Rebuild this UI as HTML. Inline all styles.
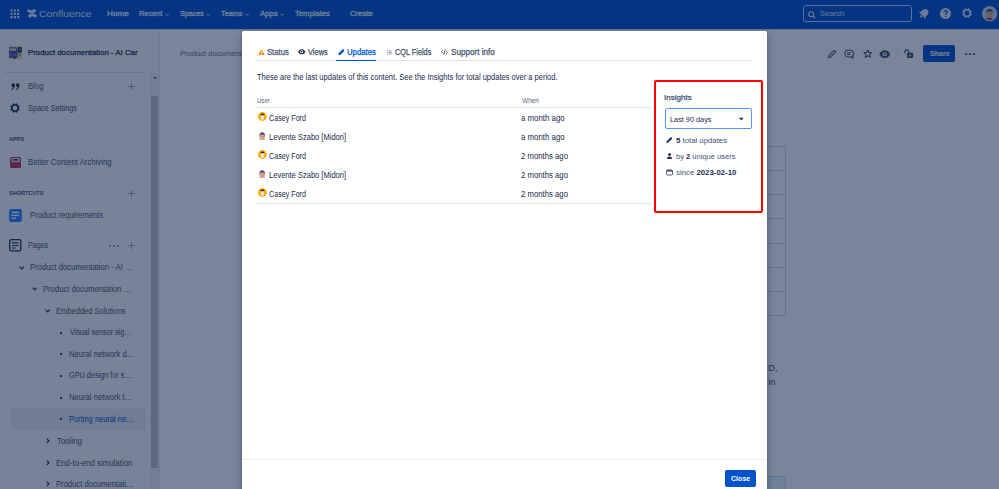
<!DOCTYPE html>
<html><head><meta charset="utf-8"><style>
html,body{margin:0;padding:0;}
body{width:999px;height:489px;overflow:hidden;position:relative;background:#fff;font-family:"Liberation Sans",sans-serif;}
.t{position:absolute;line-height:1;white-space:nowrap;}
.t b{font-weight:700;color:#172B4D}
#blanket{position:absolute;left:0;top:0;width:999px;height:489px;background:rgba(9,30,66,0.54);}
</style></head><body>
<div style="position:absolute;left:0px;top:0px;width:999px;height:28.6px;background:#0052CC"></div>
<svg style="position:absolute;left:10.2px;top:8.8px;" width="10" height="10" viewBox="0 0 10 10"><rect x="0.5" y="0.5" width="2.1" height="2.1" rx="0.3" fill="#DEEBFF"/><rect x="0.5" y="3.8" width="2.1" height="2.1" rx="0.3" fill="#DEEBFF"/><rect x="0.5" y="7.1" width="2.1" height="2.1" rx="0.3" fill="#DEEBFF"/><rect x="3.8" y="0.5" width="2.1" height="2.1" rx="0.3" fill="#DEEBFF"/><rect x="3.8" y="3.8" width="2.1" height="2.1" rx="0.3" fill="#DEEBFF"/><rect x="3.8" y="7.1" width="2.1" height="2.1" rx="0.3" fill="#DEEBFF"/><rect x="7.1" y="0.5" width="2.1" height="2.1" rx="0.3" fill="#DEEBFF"/><rect x="7.1" y="3.8" width="2.1" height="2.1" rx="0.3" fill="#DEEBFF"/><rect x="7.1" y="7.1" width="2.1" height="2.1" rx="0.3" fill="#DEEBFF"/></svg>
<svg style="position:absolute;left:26.9px;top:9.2px" width="9.7" height="8.8" viewBox="-0.6 0.6 24.2 23" preserveAspectRatio="none"><path fill="#DEEBFF" d="M2.31 18.1c-.25.4-.52.87-.75 1.24a.76.76 0 0 0 .26 1.04l5 3.080a.76.76 0 0 0 1.05-.25c.2-.33.46-.77.74-1.24 1.98-3.27 3.97-2.87 7.56-1.15l4.96 2.36a.76.76 0 0 0 1.02-.38l2.38-5.38a.76.76 0 0 0-.38-1c-1.05-.49-3.130-1.47-5-2.37C12.4 10.46 6.08 10.7 2.3 18.1z"/><path fill="#DEEBFF" d="M21.69 5.92c.25-.4.52-.87.75-1.24a.76.76 0 0 0-.26-1.04l-5-3.08a.76.76 0 0 0-1.08.23c-.2.33-.46.77-.74 1.24-1.98 3.27-3.97 2.870-7.56 1.15L2.84.83a.76.76 0 0 0-1.02.38L-.56 6.59a.76.76 0 0 0 .38 1c1.05.49 3.13 1.47 5 2.37 6.74 3.26 13.06 3.02 16.840-4.040z"/></svg>
<div class="t" style="left:39.36px;top:9.00px;font-size:9.7px;font-weight:400;color:#DEEBFF;transform:scaleX(1.0728);transform-origin:0 0;">Confluence</div>
<div class="t" style="left:107.37px;top:10.00px;font-size:7.8px;font-weight:400;-webkit-text-stroke:0.35px #DEEBFF;color:#DEEBFF;transform:scaleX(1.0452);transform-origin:0 0;">Home</div>
<div class="t" style="left:139.43px;top:10.00px;font-size:7.8px;font-weight:400;-webkit-text-stroke:0.35px #DEEBFF;color:#DEEBFF;transform:scaleX(0.9461);transform-origin:0 0;">Recent</div>
<div class="t" style="left:179.93px;top:10.00px;font-size:7.8px;font-weight:400;-webkit-text-stroke:0.35px #DEEBFF;color:#DEEBFF;transform:scaleX(0.9209);transform-origin:0 0;">Spaces</div>
<div class="t" style="left:221.31px;top:10.00px;font-size:7.8px;font-weight:400;-webkit-text-stroke:0.35px #DEEBFF;color:#DEEBFF;transform:scaleX(0.9333);transform-origin:0 0;">Teams</div>
<div class="t" style="left:259.90px;top:10.00px;font-size:7.8px;font-weight:400;-webkit-text-stroke:0.35px #DEEBFF;color:#DEEBFF;transform:scaleX(1.0057);transform-origin:0 0;">Apps</div>
<div class="t" style="left:295.10px;top:10.00px;font-size:7.8px;font-weight:400;-webkit-text-stroke:0.35px #DEEBFF;color:#DEEBFF;transform:scaleX(0.9801);transform-origin:0 0;">Templates</div>
<div class="t" style="left:350.11px;top:10.00px;font-size:7.8px;font-weight:400;-webkit-text-stroke:0.35px #DEEBFF;color:#DEEBFF;transform:scaleX(0.9692);transform-origin:0 0;">Create</div>
<svg style="position:absolute;left:165.3px;top:12.6px;" width="4.5" height="3.5" viewBox="0 0 4.5 3.5"><path d="M.5.6 2.2 2.5 3.9.6" stroke="#DEEBFF" stroke-width=".85" fill="none"/></svg>
<svg style="position:absolute;left:205.6px;top:12.6px;" width="4.5" height="3.5" viewBox="0 0 4.5 3.5"><path d="M.5.6 2.2 2.5 3.9.6" stroke="#DEEBFF" stroke-width=".85" fill="none"/></svg>
<svg style="position:absolute;left:245.3px;top:12.6px;" width="4.5" height="3.5" viewBox="0 0 4.5 3.5"><path d="M.5.6 2.2 2.5 3.9.6" stroke="#DEEBFF" stroke-width=".85" fill="none"/></svg>
<svg style="position:absolute;left:279.8px;top:12.6px;" width="4.5" height="3.5" viewBox="0 0 4.5 3.5"><path d="M.5.6 2.2 2.5 3.9.6" stroke="#DEEBFF" stroke-width=".85" fill="none"/></svg>
<div style="position:absolute;left:803px;top:5px;width:108.5px;height:17px;box-sizing:border-box;border:1px solid #B3D4FF;border-radius:3px;background:rgba(255,255,255,0.0)"></div>
<svg style="position:absolute;left:808px;top:10.5px;" width="8" height="8" viewBox="0 0 8 8"><circle cx="3.2" cy="3.2" r="2.5" stroke="#DEEBFF" stroke-width="1.1" fill="none"/><path d="M5 5 7.2 7.2" stroke="#DEEBFF" stroke-width="1.2"/></svg>
<div class="t" style="left:820.11px;top:10.00px;font-size:7.8px;font-weight:400;color:#DEEBFF;transform:scaleX(0.9874);transform-origin:0 0;">Search</div>
<svg style="position:absolute;left:917px;top:7px;" width="14" height="13" viewBox="0 0 14 13"><g transform="rotate(45 7 6.5)"><path d="M7 1.6c-2 0-3.4 1.5-3.4 3.5v2.4L2.3 9.2h9.4L10.4 7.5V5.1C10.4 3.1 9 1.6 7 1.6z" fill="#DEEBFF"/><ellipse cx="7" cy="10.6" rx="1.3" ry=".9" fill="#DEEBFF"/></g></svg>
<svg style="position:absolute;left:940px;top:8px;" width="11" height="11" viewBox="0 0 11 11"><circle cx="5.5" cy="5.5" r="5.5" fill="#DEEBFF"/><path d="M3.8 4.3c0-1 .8-1.7 1.7-1.7s1.7.7 1.7 1.6c0 1.2-1.6 1.3-1.6 2.5" stroke="#0052CC" stroke-width="1.2" fill="none"/><circle cx="5.6" cy="8.4" r=".7" fill="#0052CC"/></svg>
<svg style="position:absolute;left:961.8px;top:8.4px;" width="10" height="10" viewBox="0 0 10 10"><circle cx="5" cy="5" r="3.3" stroke="#DEEBFF" stroke-width="1.5" fill="none"/><rect x="4.1" y="0.1" width="1.8" height="2" fill="#DEEBFF" transform="rotate(22.5 5 5)"/><rect x="4.1" y="0.1" width="1.8" height="2" fill="#DEEBFF" transform="rotate(67.5 5 5)"/><rect x="4.1" y="0.1" width="1.8" height="2" fill="#DEEBFF" transform="rotate(112.5 5 5)"/><rect x="4.1" y="0.1" width="1.8" height="2" fill="#DEEBFF" transform="rotate(157.5 5 5)"/><rect x="4.1" y="0.1" width="1.8" height="2" fill="#DEEBFF" transform="rotate(202.5 5 5)"/><rect x="4.1" y="0.1" width="1.8" height="2" fill="#DEEBFF" transform="rotate(247.5 5 5)"/><rect x="4.1" y="0.1" width="1.8" height="2" fill="#DEEBFF" transform="rotate(292.5 5 5)"/><rect x="4.1" y="0.1" width="1.8" height="2" fill="#DEEBFF" transform="rotate(337.5 5 5)"/></svg>
<svg style="position:absolute;left:982px;top:6px;" width="16" height="16" viewBox="0 0 16 16"><circle cx="7.6" cy="7.7" r="7.5" fill="#EBEEF2"/><circle cx="7.6" cy="7.7" r="6.6" fill="#C9D1DC"/><path d="M4.2 12.5C5 13.6 6.2 14.2 7.6 14.2s2.6-.6 3.4-1.7c-.9-.7-2-1-3.4-1s-2.5.3-3.4 1z" fill="#8E3A4C"/><ellipse cx="7.6" cy="8" rx="3.1" ry="3.9" fill="#D7AE9B"/><path d="M4.3 6.9C4.2 4.3 5.7 3 7.6 3s3.4 1.3 3.3 3.9C10.3 5.7 9.1 5.2 7.6 5.2S4.9 5.7 4.3 6.9z" fill="#3E4470"/><circle cx="6.4" cy="7.6" r=".45" fill="#2A2A3A"/><circle cx="8.8" cy="7.6" r=".45" fill="#2A2A3A"/></svg>
<div style="position:absolute;left:0px;top:28.5px;width:160px;height:461px;background:#FAFBFC"></div>
<div style="position:absolute;left:159px;top:28.5px;width:1px;height:461px;background:#EBECF0"></div>
<svg style="position:absolute;left:8.9px;top:45.9px;" width="13.2" height="13.2" viewBox="0 0 13.2 13.2"><rect width="13.2" height="13.2" rx="2.2" fill="#EADB8C"/><path d="M0 1.2h6.8c.6 0 1 .3 1.2.8l.6 1.6V11c0 .6-.4 1-1 1H.8C.3 12 0 11.7 0 11.2z" fill="#5050C0"/><rect x=".4" y="2.4" width="6.6" height="2.4" fill="#EADB8C"/><rect x="0" y="5.4" width="8.6" height="1" fill="#4040A8"/><path d="M1 8.8h1.2M4.6 8.9h2.4" stroke="#C8C8F0" stroke-width=".6"/><circle cx="5.7" cy="12.2" r=".9" fill="#25285A"/><rect x="8.9" y="1" width="4" height="5.4" rx="1.2" fill="#262B5C"/><path d="M10.9 2.2 11.6 3.6 10.9 5 10.2 3.6z" fill="#F0F0FF"/><path d="M10.9 6.4v2.8c0 .5-.4.8-.9.8" stroke="#262B5C" stroke-width=".7" fill="none"/></svg>
<div class="t" style="left:28.01px;top:49.00px;font-size:8.0px;font-weight:400;-webkit-text-stroke:0.25px #172B4D;color:#172B4D;transform:scaleX(0.9819);transform-origin:0 0;">Product documentation - AI Car</div>
<div style="position:absolute;left:4px;top:72px;width:141px;height:1px;background:#DFE1E6"></div>
<div style="position:absolute;left:150px;top:72px;width:9px;height:417px;background:#F1F1F1"></div>
<div style="position:absolute;left:151px;top:96px;width:7px;height:371.5px;background:#C1C1C1"></div>
<svg style="position:absolute;left:152.5px;top:75.5px;" width="4" height="3" viewBox="0 0 4 3"><path d="M0 2.5 2 .3 4 2.5z" fill="#505050"/></svg>
<svg style="position:absolute;left:11.2px;top:82.8px;" width="9" height="7.6" viewBox="0 0 9 7.6"><path d="M2.1.2c1 0 1.8.8 1.8 1.9 0 2.3-1.3 4.2-3.3 5.2l-.4-.5c1-.8 1.6-1.7 1.8-2.9C.9 3.8.3 3.1.3 2.1.3 1 1.1.2 2.1.2z" fill="#172B4D"/><path transform="translate(4.6 0)" d="M2.1.2c1 0 1.8.8 1.8 1.9 0 2.3-1.3 4.2-3.3 5.2l-.4-.5c1-.8 1.6-1.7 1.8-2.9C.9 3.8.3 3.1.3 2.1.3 1 1.1.2 2.1.2z" fill="#172B4D"/></svg>
<div class="t" style="left:27.96px;top:82.00px;font-size:8.5px;font-weight:400;color:#42526E;transform:scaleX(0.9172);transform-origin:0 0;">Blog</div>
<svg style="position:absolute;left:128px;top:82.9px;" width="7" height="7" viewBox="0 0 7 7"><path d="M3.5 0v7M0 3.5h7" stroke="#8993A4" stroke-width=".8"/></svg>
<svg style="position:absolute;left:9.8px;top:102.8px;" width="10" height="10" viewBox="0 0 10 10"><circle cx="5" cy="5" r="3.1" stroke="#172B4D" stroke-width="1.4" fill="none"/><rect x="4.1" y="0.2" width="1.8" height="2" rx=".3" fill="#172B4D" transform="rotate(22.5 5 5)"/><rect x="4.1" y="0.2" width="1.8" height="2" rx=".3" fill="#172B4D" transform="rotate(67.5 5 5)"/><rect x="4.1" y="0.2" width="1.8" height="2" rx=".3" fill="#172B4D" transform="rotate(112.5 5 5)"/><rect x="4.1" y="0.2" width="1.8" height="2" rx=".3" fill="#172B4D" transform="rotate(157.5 5 5)"/><rect x="4.1" y="0.2" width="1.8" height="2" rx=".3" fill="#172B4D" transform="rotate(202.5 5 5)"/><rect x="4.1" y="0.2" width="1.8" height="2" rx=".3" fill="#172B4D" transform="rotate(247.5 5 5)"/><rect x="4.1" y="0.2" width="1.8" height="2" rx=".3" fill="#172B4D" transform="rotate(292.5 5 5)"/><rect x="4.1" y="0.2" width="1.8" height="2" rx=".3" fill="#172B4D" transform="rotate(337.5 5 5)"/></svg>
<div class="t" style="left:28.26px;top:104.00px;font-size:8.5px;font-weight:400;color:#42526E;transform:scaleX(0.8566);transform-origin:0 0;">Space Settings</div>
<div class="t" style="left:8.82px;top:136.00px;font-size:6.2px;font-weight:700;color:#42526E;transform:scaleX(0.8963);transform-origin:0 0;">APPS</div>
<svg style="position:absolute;left:9.7px;top:156.9px;" width="11.4" height="11.2" viewBox="0 0 11.4 11.2"><rect width="11.4" height="11.2" rx="2.2" fill="#C03545"/><rect x="0" y="2.6" width="1.6" height="1.8" fill="#2D5C9E"/><rect x="9.8" y="2.6" width="1.6" height="1.8" fill="#2D5C9E"/><rect x="1.5" y=".9" width="8.4" height="4.2" rx="1.6" fill="#E4E4EC"/><rect x="3.2" y="2.1" width="4.8" height="1.7" rx=".3" fill="#3A3F5C"/><rect x="0" y="5.6" width="11.4" height=".6" fill="#D86070"/><rect x="5.6" y="6.3" width=".5" height="4.9" fill="#8A2030"/></svg>
<div class="t" style="left:27.96px;top:158.00px;font-size:8.5px;font-weight:400;color:#42526E;transform:scaleX(0.9115);transform-origin:0 0;">Better Content Archiving</div>
<div class="t" style="left:8.82px;top:190.00px;font-size:6.2px;font-weight:700;color:#42526E;transform:scaleX(0.8924);transform-origin:0 0;">SHORTCUTS</div>
<svg style="position:absolute;left:128px;top:189.5px;" width="7" height="7" viewBox="0 0 7 7"><path d="M3.5 0v7M0 3.5h7" stroke="#8993A4" stroke-width=".8"/></svg>
<svg style="position:absolute;left:8.7px;top:209px;" width="13" height="13" viewBox="0 0 13 13"><rect x=".1" y=".1" width="12.8" height="12.8" rx="1.8" fill="#2684FF"/><path d="M2.6 3.5h7.6M2.6 6.3h7.6M2.6 9.1h4.4" stroke="#fff" stroke-width="1.3"/></svg>
<div class="t" style="left:30.17px;top:211.00px;font-size:8.5px;font-weight:400;color:#42526E;transform:scaleX(0.8978);transform-origin:0 0;">Product requirements</div>
<svg style="position:absolute;left:9px;top:239.2px;" width="12.5" height="12.5" viewBox="0 0 12.5 12.5"><rect x=".7" y=".7" width="11.1" height="11.1" rx="1.6" stroke="#172B4D" stroke-width="1.3" fill="none"/><path d="M2.8 3.9h6.9M2.8 6.5h6.9M2.8 9h4.1" stroke="#172B4D" stroke-width="1.1"/></svg>
<div class="t" style="left:28.02px;top:241.00px;font-size:8.5px;font-weight:400;color:#42526E;transform:scaleX(0.8312);transform-origin:0 0;">Pages</div>
<svg style="position:absolute;left:109px;top:244.5px;" width="10" height="2" viewBox="0 0 10 2"><circle cx="1" cy="1" r=".95" fill="#6B778C"/><circle cx="4.9" cy="1" r=".95" fill="#6B778C"/><circle cx="8.8" cy="1" r=".95" fill="#6B778C"/></svg>
<svg style="position:absolute;left:128px;top:242.1px;" width="7" height="7" viewBox="0 0 7 7"><path d="M3.5 0v7M0 3.5h7" stroke="#8993A4" stroke-width=".8"/></svg>
<svg style="position:absolute;left:19.1px;top:265.8px;" width="6" height="4" viewBox="0 0 6 4"><path d="M.6.6 2.7 2.8 4.8.6" stroke="#172B4D" stroke-width="1.2" fill="none"/></svg>
<div class="t" style="left:30.17px;top:263.00px;font-size:8.5px;font-weight:400;color:#42526E;transform:scaleX(0.9050);transform-origin:0 0;">Product documentation - AI …</div>
<svg style="position:absolute;left:32.2px;top:287.4px;" width="6" height="4" viewBox="0 0 6 4"><path d="M.6.6 2.7 2.8 4.8.6" stroke="#172B4D" stroke-width="1.2" fill="none"/></svg>
<div class="t" style="left:43.27px;top:285.00px;font-size:8.5px;font-weight:400;color:#42526E;transform:scaleX(0.8994);transform-origin:0 0;">Product documentation …</div>
<svg style="position:absolute;left:45.1px;top:309px;" width="6" height="4" viewBox="0 0 6 4"><path d="M.6.6 2.7 2.8 4.8.6" stroke="#172B4D" stroke-width="1.2" fill="none"/></svg>
<div class="t" style="left:56.38px;top:307.00px;font-size:8.5px;font-weight:400;color:#42526E;transform:scaleX(0.8876);transform-origin:0 0;">Embedded Solutions</div>
<div style="position:absolute;left:59.9px;top:331.9px;width:2px;height:2px;background:#172B4D;border-radius:0.5px"></div>
<div class="t" style="left:69.52px;top:328.00px;font-size:8.5px;font-weight:400;color:#42526E;transform:scaleX(0.8459);transform-origin:0 0;">Visual sensor sig…</div>
<div style="position:absolute;left:59.9px;top:353.4px;width:2px;height:2px;background:#172B4D;border-radius:0.5px"></div>
<div class="t" style="left:68.97px;top:350.00px;font-size:8.5px;font-weight:400;color:#42526E;transform:scaleX(0.8999);transform-origin:0 0;">Neural network d…</div>
<div style="position:absolute;left:59.9px;top:375.0px;width:2px;height:2px;background:#172B4D;border-radius:0.5px"></div>
<div class="t" style="left:69.26px;top:371.00px;font-size:8.5px;font-weight:400;color:#42526E;transform:scaleX(0.8563);transform-origin:0 0;">GPU design for s…</div>
<div style="position:absolute;left:59.9px;top:396.59999999999997px;width:2px;height:2px;background:#172B4D;border-radius:0.5px"></div>
<div class="t" style="left:68.97px;top:393.00px;font-size:8.5px;font-weight:400;color:#42526E;transform:scaleX(0.8993);transform-origin:0 0;">Neural network t…</div>
<div style="position:absolute;left:11px;top:408.2px;width:134.7px;height:21.5px;background:#EBECF0;border-radius:2px"></div>
<div style="position:absolute;left:59.9px;top:418.3px;width:2px;height:2px;background:#172B4D;border-radius:0.5px"></div>
<div class="t" style="left:69.08px;top:415.00px;font-size:8.5px;font-weight:400;color:#0052CC;transform:scaleX(0.8838);transform-origin:0 0;">Porting neural ne…</div>
<svg style="position:absolute;left:46px;top:438.1px;" width="4" height="6" viewBox="0 0 4 6"><path d="M.8.7 2.9 2.8 .8 4.9" stroke="#172B4D" stroke-width="1.2" fill="none"/></svg>
<div class="t" style="left:56.61px;top:437.00px;font-size:8.5px;font-weight:400;color:#42526E;transform:scaleX(0.9275);transform-origin:0 0;">Tooling</div>
<svg style="position:absolute;left:46px;top:459.9px;" width="4" height="6" viewBox="0 0 4 6"><path d="M.8.7 2.9 2.8 .8 4.9" stroke="#172B4D" stroke-width="1.2" fill="none"/></svg>
<div class="t" style="left:56.15px;top:459.00px;font-size:8.5px;font-weight:400;color:#42526E;transform:scaleX(0.9238);transform-origin:0 0;">End-to-end simulation</div>
<svg style="position:absolute;left:46px;top:481.4px;" width="4" height="6" viewBox="0 0 4 6"><path d="M.8.7 2.9 2.8 .8 4.9" stroke="#172B4D" stroke-width="1.2" fill="none"/></svg>
<div class="t" style="left:56.17px;top:480.00px;font-size:8.5px;font-weight:400;color:#42526E;transform:scaleX(0.8972);transform-origin:0 0;">Product documentati…</div>
<div class="t" style="left:180.14px;top:50.00px;font-size:8.0px;font-weight:400;color:#5E6C84;transform:scaleX(0.9477);transform-origin:0 0;">Product documentation - AI Car</div>
<svg style="position:absolute;left:826.7px;top:49.7px;" width="9" height="9" viewBox="0 0 9 9"><path d="M1.2 7.8 2 5.4 6.6.8c.4-.4 1-.4 1.3 0l.3.3c.4.4.4 1 0 1.3L3.6 7l-2.4.8z" stroke="#42526E" stroke-width="1.1" fill="none" stroke-linejoin="round"/></svg>
<svg style="position:absolute;left:844px;top:49px;" width="10.5" height="10" viewBox="0 0 10.5 10"><path d="M5.2 1C2.6 1 .7 2.6.7 4.5S2.6 8 5.2 8c.6 0 1.2-.1 1.7-.3L9 9 8.4 6.8C9.3 6.2 9.8 5.4 9.8 4.5 9.8 2.6 7.8 1 5.2 1z" stroke="#42526E" stroke-width="1.1" fill="none"/><path d="M3 3.8h4.5M3 5.5h3" stroke="#42526E" stroke-width="1"/></svg>
<svg style="position:absolute;left:863px;top:49.3px;" width="9.5" height="9.5" viewBox="0 0 9.5 9.5"><path d="M4.75.9 5.9 3.4 8.6 3.7 6.6 5.5 7.2 8.2 4.75 6.8 2.3 8.2 2.9 5.5.9 3.7 3.6 3.4z" stroke="#42526E" stroke-width="1.1" fill="none" stroke-linejoin="round"/></svg>
<svg style="position:absolute;left:879.4px;top:49.5px;" width="11.5" height="8.5" viewBox="0 0 11.5 8.5"><path d="M.3 4.25C1.6 1.6 3.5.3 5.75.3s4.15 1.3 5.45 3.95C9.9 6.9 8 8.2 5.75 8.2S1.6 6.9.3 4.25z" fill="#42526E"/><circle cx="5.75" cy="4.25" r="2.1" fill="#fff"/><circle cx="5.75" cy="4.25" r="1.05" fill="#42526E"/></svg>
<div style="position:absolute;left:897.3px;top:49.8px;width:1.2px;height:7.8px;background:#DFE1E6"></div>
<svg style="position:absolute;left:904px;top:49.2px;" width="10" height="9.5" viewBox="0 0 10 9.5"><path d="M.9 4.6V2.8C.9 1.6 1.8.8 2.8.8s1.9.8 1.9 2V4" stroke="#42526E" stroke-width="1.3" fill="none"/><rect x="3" y="3.8" width="6.2" height="5.2" rx=".8" fill="#42526E"/><rect x="5.3" y="5.6" width="1.7" height="1.6" fill="#fff"/></svg>
<div style="position:absolute;left:923.1px;top:44.9px;width:32.2px;height:17.4px;background:#0052CC;border-radius:2px"></div>
<div class="t" style="left:929.51px;top:50.00px;font-size:7.6px;font-weight:700;color:#FFFFFF;transform:scaleX(0.9324);transform-origin:0 0;">Share</div>
<svg style="position:absolute;left:964.5px;top:52.6px;" width="11" height="2.5" viewBox="0 0 11 2.5"><circle cx="1.2" cy="1.2" r="1.1" fill="#42526E"/><circle cx="5.1" cy="1.2" r="1.1" fill="#42526E"/><circle cx="9" cy="1.2" r="1.1" fill="#42526E"/></svg>
<div style="position:absolute;left:740px;top:146px;width:46px;height:169.5px;box-sizing:border-box;border:1px solid #D0D5DD"></div>
<div style="position:absolute;left:740px;top:170px;width:46px;height:1px;background:#D0D5DD"></div>
<div style="position:absolute;left:740px;top:194px;width:46px;height:1px;background:#D0D5DD"></div>
<div style="position:absolute;left:740px;top:218px;width:46px;height:1px;background:#D0D5DD"></div>
<div style="position:absolute;left:740px;top:243px;width:46px;height:1px;background:#D0D5DD"></div>
<div style="position:absolute;left:740px;top:267px;width:46px;height:1px;background:#D0D5DD"></div>
<div style="position:absolute;left:740px;top:291px;width:46px;height:1px;background:#D0D5DD"></div>
<div class="t" style="left:768.20px;top:364.00px;font-size:9.3px;font-weight:400;color:#42526E;">D,</div>
<div class="t" style="left:768.20px;top:378.00px;font-size:9.3px;font-weight:400;color:#42526E;">in</div>
<div style="position:absolute;left:740px;top:475.6px;width:46px;height:20px;box-sizing:border-box;border:1px solid #D0D5DD;background:#E6F4FF"></div>
<div style="position:absolute;left:0px;top:28.6px;width:999px;height:1.4px;background:#DCDFE4"></div>
<div id="blanket"></div>
<div style="position:absolute;left:241.6px;top:31.2px;width:525.4px;height:470px;background:#fff;border-radius:1.5px;box-shadow:0 0 1px rgba(9,30,66,0.45), 0 5px 6px 1px rgba(9,30,66,0.32)"></div>
<svg style="position:absolute;left:257.8px;top:48.6px;" width="7" height="6.5" viewBox="0 0 7 6.5"><path d="M3.5.3 6.9 6.3H.1z" fill="#FF8B00"/><rect x="3.05" y="2.3" width=".9" height="2.2" fill="#fff"/><rect x="3.05" y="5" width=".9" height=".8" fill="#fff"/></svg>
<div class="t" style="left:267.43px;top:48.00px;font-size:8.3px;font-weight:400;-webkit-text-stroke:0.25px #42526E;color:#42526E;transform:scaleX(0.9254);transform-origin:0 0;">Status</div>
<svg style="position:absolute;left:298px;top:49px;" width="7.5" height="5.5" viewBox="0 0 7.5 5.5"><path d="M.2 2.75C1 1 2.2.2 3.75.2S6.5 1 7.3 2.75C6.5 4.5 5.3 5.3 3.75 5.3S1 4.5.2 2.75z" fill="#172B4D"/><circle cx="3.75" cy="2.75" r="1.5" fill="#fff"/><circle cx="3.75" cy="2.75" r=".7" fill="#172B4D"/></svg>
<div class="t" style="left:308.41px;top:48.00px;font-size:8.3px;font-weight:400;-webkit-text-stroke:0.25px #42526E;color:#42526E;transform:scaleX(0.8981);transform-origin:0 0;">Views</div>
<svg style="position:absolute;left:337.8px;top:48.7px;" width="6.6" height="6.6" viewBox="0 0 6.6 6.6"><path d="M4.4.5c.4-.4 1-.4 1.4 0l.3.3c.4.4.4 1 0 1.4L2.3 6 .3 6.3.6 4.3z" fill="#0052CC"/></svg>
<div class="t" style="left:347.44px;top:48.00px;font-size:8.3px;font-weight:400;-webkit-text-stroke:0.25px #0052CC;color:#0052CC;transform:scaleX(0.9333);transform-origin:0 0;">Updates</div>
<svg style="position:absolute;left:387px;top:49.6px;" width="5" height="5" viewBox="0 0 5 5"><path d="M.2 .9h1M.2 2.5h1M.2 4.1h1M1.8 .9h2.8M1.8 2.5h2.8M1.8 4.1h2.8" stroke="#8993A4" stroke-width=".95"/></svg>
<div class="t" style="left:395.15px;top:48.00px;font-size:8.3px;font-weight:400;-webkit-text-stroke:0.25px #42526E;color:#42526E;transform:scaleX(0.8815);transform-origin:0 0;">CQL Fields</div>
<svg style="position:absolute;left:440.8px;top:49.2px;" width="7" height="6" viewBox="0 0 7 6"><path d="M1.9 1 .5 2.6 1.9 4.2M5.1 1.8 6.5 3.4 5.1 5M4.3.3 2.7 5.7" stroke="#42526E" stroke-width=".9" fill="none"/></svg>
<div class="t" style="left:450.61px;top:48.00px;font-size:8.3px;font-weight:400;-webkit-text-stroke:0.25px #42526E;color:#42526E;transform:scaleX(0.9773);transform-origin:0 0;">Support info</div>
<div style="position:absolute;left:257px;top:60px;width:495px;height:1px;background:#DFE1E6"></div>
<div style="position:absolute;left:336.4px;top:59.5px;width:39.6px;height:1.7px;background:#0052CC;border-radius:1px"></div>
<div class="t" style="left:257.02px;top:73.00px;font-size:8.3px;font-weight:400;color:#172B4D;transform:scaleX(0.9077);transform-origin:0 0;">These are the last updates of this content. See the Insights for total updates over a period.</div>
<div class="t" style="left:256.76px;top:98.00px;font-size:6.9px;font-weight:400;color:#5E6C84;transform:scaleX(0.8786);transform-origin:0 0;">User</div>
<div class="t" style="left:522.00px;top:98.00px;font-size:6.9px;font-weight:400;color:#5E6C84;transform:scaleX(0.9432);transform-origin:0 0;">When</div>
<div style="position:absolute;left:257px;top:106.8px;width:394px;height:1.3px;background:#DFE1E6"></div>
<svg style="position:absolute;left:257.8px;top:112.1px;" width="9" height="9" viewBox="0 0 9 9"><circle cx="4.4" cy="4.5" r="4.4" fill="#FFAB00"/><path d="M2.5 3.4c0 2.6.7 4.4 1.9 4.8 1.2-.4 1.9-2.2 1.9-4.8z" fill="#FBE3DA"/><path d="M2.3 3.6C2.3 2 3.2 1.4 4.4 1.4s2.1.6 2.1 2.2c-.6-.4-1.3-.5-2.1-.5s-1.5.1-2.1.5z" fill="#172B4D"/></svg>
<div class="t" style="left:268.56px;top:114.00px;font-size:8.4px;font-weight:400;color:#172B4D;transform:scaleX(0.8541);transform-origin:0 0;">Casey Ford</div>
<div class="t" style="left:521.02px;top:114.00px;font-size:8.4px;font-weight:400;color:#172B4D;transform:scaleX(0.9390);transform-origin:0 0;">a month ago</div>
<svg style="position:absolute;left:258px;top:131.7px;" width="8.5" height="8.5" viewBox="0 0 8.5 8.5"><path d="M.9 8.5c.5-1.3 1.7-2 3.3-2s2.8.7 3.3 2z" fill="#8FB8B8"/><ellipse cx="4.2" cy="4.6" rx="2.8" ry="3.4" fill="#E2A282"/><path d="M1.4 3.9C1.3 1.5 2.6.2 4.2.2s2.9 1.3 2.8 3.7C6.3 3 5.3 2.6 4.2 2.6S2.1 3 1.4 3.9z" fill="#4B3F8C"/><path d="M2.6 4.6h1M4.9 4.6h1" stroke="#7A4A40" stroke-width=".5"/></svg>
<div class="t" style="left:268.87px;top:133.00px;font-size:8.4px;font-weight:400;color:#172B4D;transform:scaleX(0.8995);transform-origin:0 0;">Levente Szabo [Midori]</div>
<div class="t" style="left:521.02px;top:133.00px;font-size:8.4px;font-weight:400;color:#172B4D;transform:scaleX(0.9390);transform-origin:0 0;">a month ago</div>
<svg style="position:absolute;left:257.8px;top:150.1px;" width="9" height="9" viewBox="0 0 9 9"><circle cx="4.4" cy="4.5" r="4.4" fill="#FFAB00"/><path d="M2.5 3.4c0 2.6.7 4.4 1.9 4.8 1.2-.4 1.9-2.2 1.9-4.8z" fill="#FBE3DA"/><path d="M2.3 3.6C2.3 2 3.2 1.4 4.4 1.4s2.1.6 2.1 2.2c-.6-.4-1.3-.5-2.1-.5s-1.5.1-2.1.5z" fill="#172B4D"/></svg>
<div class="t" style="left:268.56px;top:152.00px;font-size:8.4px;font-weight:400;color:#172B4D;transform:scaleX(0.8541);transform-origin:0 0;">Casey Ford</div>
<div class="t" style="left:521.03px;top:152.00px;font-size:8.4px;font-weight:400;color:#172B4D;transform:scaleX(0.9261);transform-origin:0 0;">2 months ago</div>
<svg style="position:absolute;left:258px;top:169.7px;" width="8.5" height="8.5" viewBox="0 0 8.5 8.5"><path d="M.9 8.5c.5-1.3 1.7-2 3.3-2s2.8.7 3.3 2z" fill="#8FB8B8"/><ellipse cx="4.2" cy="4.6" rx="2.8" ry="3.4" fill="#E2A282"/><path d="M1.4 3.9C1.3 1.5 2.6.2 4.2.2s2.9 1.3 2.8 3.7C6.3 3 5.3 2.6 4.2 2.6S2.1 3 1.4 3.9z" fill="#4B3F8C"/><path d="M2.6 4.6h1M4.9 4.6h1" stroke="#7A4A40" stroke-width=".5"/></svg>
<div class="t" style="left:268.87px;top:171.00px;font-size:8.4px;font-weight:400;color:#172B4D;transform:scaleX(0.8995);transform-origin:0 0;">Levente Szabo [Midori]</div>
<div class="t" style="left:521.03px;top:171.00px;font-size:8.4px;font-weight:400;color:#172B4D;transform:scaleX(0.9261);transform-origin:0 0;">2 months ago</div>
<svg style="position:absolute;left:257.8px;top:188.1px;" width="9" height="9" viewBox="0 0 9 9"><circle cx="4.4" cy="4.5" r="4.4" fill="#FFAB00"/><path d="M2.5 3.4c0 2.6.7 4.4 1.9 4.8 1.2-.4 1.9-2.2 1.9-4.8z" fill="#FBE3DA"/><path d="M2.3 3.6C2.3 2 3.2 1.4 4.4 1.4s2.1.6 2.1 2.2c-.6-.4-1.3-.5-2.1-.5s-1.5.1-2.1.5z" fill="#172B4D"/></svg>
<div class="t" style="left:268.56px;top:190.00px;font-size:8.4px;font-weight:400;color:#172B4D;transform:scaleX(0.8541);transform-origin:0 0;">Casey Ford</div>
<div class="t" style="left:521.03px;top:190.00px;font-size:8.4px;font-weight:400;color:#172B4D;transform:scaleX(0.9261);transform-origin:0 0;">2 months ago</div>
<div style="position:absolute;left:257px;top:203px;width:394px;height:1.3px;background:#DFE1E6"></div>
<div style="position:absolute;left:654px;top:79.6px;width:109px;height:133.8px;box-sizing:border-box;border:2px solid #FF0000;border-radius:2px"></div>
<div class="t" style="left:664.48px;top:94.00px;font-size:7.8px;font-weight:400;-webkit-text-stroke:0.25px #42526E;color:#42526E;transform:scaleX(1.0309);transform-origin:0 0;">Insights</div>
<div style="position:absolute;left:665.2px;top:107.8px;width:86.8px;height:21.2px;box-sizing:border-box;border:1.5px solid #4C9AFF;border-radius:2px;background:#fff"></div>
<div class="t" style="left:670.16px;top:116.00px;font-size:8.0px;font-weight:400;color:#172B4D;transform:scaleX(0.9144);transform-origin:0 0;">Last 90 days</div>
<svg style="position:absolute;left:738.6px;top:116.9px;" width="5" height="4" viewBox="0 0 5 4"><path d="M.6.7 2.3 2.5 4 .7" stroke="#253858" stroke-width="1.3" fill="none"/></svg>
<svg style="position:absolute;left:665.9px;top:136.8px;" width="6.5" height="6.3" viewBox="0 0 6.5 6.3"><path d="M.3 6 .7 4.2 4.5.4c.3-.3.7-.3 1 0l.5.5c.3.3.3.7 0 1L2.1 5.6z" fill="#172B4D"/></svg>
<div class="t" style="left:675.90px;top:137.00px;font-size:7.8px;font-weight:400;color:#42526E;transform:scaleX(0.9980);transform-origin:0 0;"><b>5</b> total updates</div>
<svg style="position:absolute;left:667px;top:152.6px;" width="5" height="6.6" viewBox="0 0 5 6.6"><circle cx="2.5" cy="1.6" r="1.5" fill="#172B4D"/><path d="M0 6.5C0 4.6.9 3.6 2.5 3.6S5 4.6 5 6.5z" fill="#172B4D"/></svg>
<div class="t" style="left:675.72px;top:153.00px;font-size:7.8px;font-weight:400;color:#42526E;transform:scaleX(0.9671);transform-origin:0 0;">by <b>2</b> unique users</div>
<svg style="position:absolute;left:666px;top:169.2px;" width="7" height="6.5" viewBox="0 0 7 6.5"><rect x=".5" y="1" width="6" height="5" rx=".8" stroke="#42526E" stroke-width=".9" fill="none"/><rect x=".5" y="1" width="6" height="1.6" fill="#42526E"/></svg>
<div class="t" style="left:676.00px;top:169.00px;font-size:7.8px;font-weight:400;color:#42526E;transform:scaleX(1.0017);transform-origin:0 0;">since <b>2023-02-10</b></div>
<div style="position:absolute;left:242px;top:459px;width:525px;height:1px;background:#EBECF0"></div>
<div style="position:absolute;left:724.9px;top:469.7px;width:31.1px;height:17.1px;background:#0052CC;border-radius:2px"></div>
<div class="t" style="left:730.92px;top:475.00px;font-size:7.6px;font-weight:700;color:#FFFFFF;transform:scaleX(0.9303);transform-origin:0 0;">Close</div>
</body></html>
